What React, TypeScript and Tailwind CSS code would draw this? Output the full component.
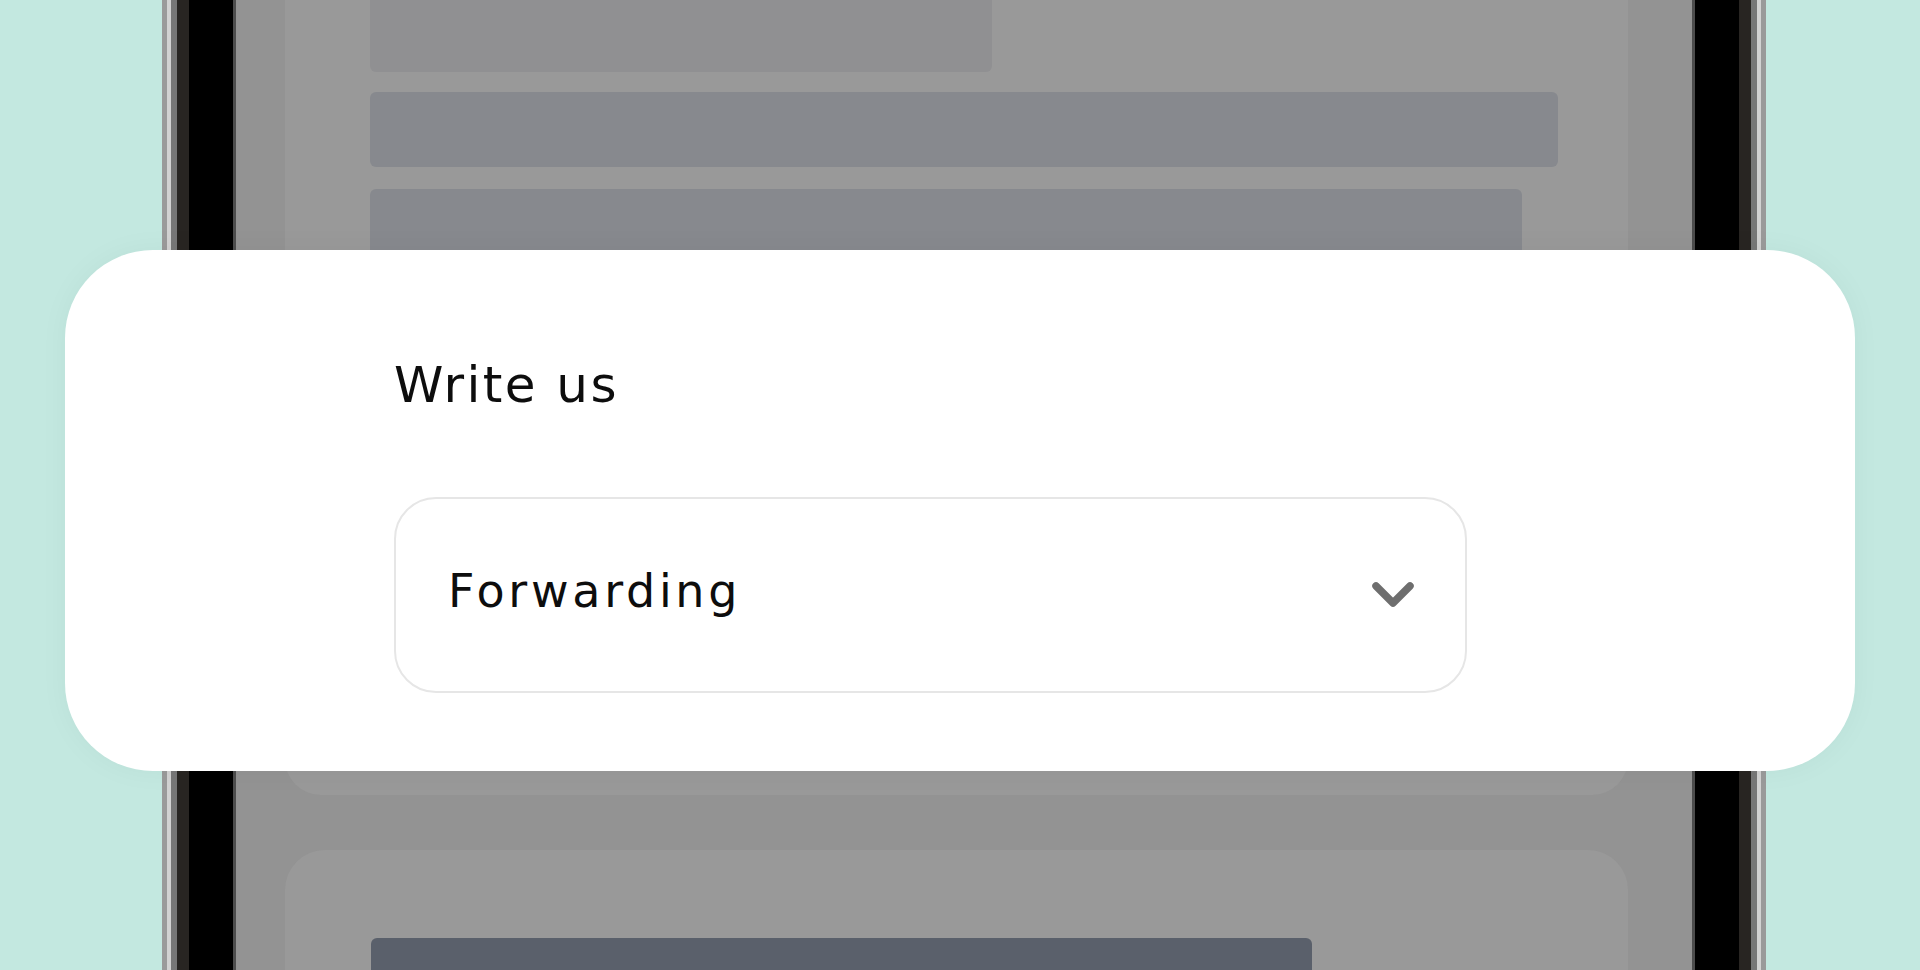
export default function App() {
  return (
    <div className="relative h-[970px] w-[1920px] overflow-hidden bg-[#c3e8e0] font-['DejaVu_Sans',sans-serif]">
      {/* phone frame */}
      <div className="ml-[162px] h-full w-[1604px] border-x-[5px] border-[#9a9a9a]">
        <div className="h-full border-x-[4px] border-[#d2d2d2]">
          <div className="h-full border-x-[6px] border-[#777777]">
            <div className="h-full border-x-[12px] border-[#282522]">
              <div className="h-full border-x-[44px] border-black">
                <div className="h-full border-x-[3px] border-[#4d4d4d] bg-[#939393] pl-[49px] pr-[64px]">
                  {/* card 1 */}
                  <div className="flex h-[795px] flex-col rounded-b-[36px] bg-[#999999] pl-[85px]">
                    <div className="h-[72px] w-[622px] rounded-b-[6px] bg-[#909092]" />
                    <div className="mt-[20px] h-[75px] w-[1188px] rounded-[6px] bg-[#87898e]" />
                    <div className="mt-[22px] h-[75px] w-[1152px] rounded-[6px] bg-[#87898e]" />
                  </div>
                  {/* card 2 */}
                  <div className="mt-[55px] h-[200px] rounded-t-[40px] bg-[#999999] pl-[86px] pt-[88px]">
                    <div className="h-[80px] w-[941px] rounded-t-[6px] bg-[#5a606b]" />
                  </div>
                </div>
              </div>
            </div>
          </div>
        </div>
      </div>

      {/* overlay card */}
      <div className="absolute left-[65px] top-[250px] h-[521px] w-[1790px] rounded-[88px] bg-white pl-[329px] pt-[110px] shadow-[0_0_30px_rgba(0,0,0,0.04)]">
        <h2 className="text-[50px] font-normal leading-[50px] tracking-[2.4px] text-[#0d0d0d]">
          Write us
        </h2>
        <div className="mt-[87px] flex h-[196px] w-[1073px] items-center justify-between rounded-[42px] border-2 border-[#e6e6e6] pl-[52px] pr-[50px]">
          <span className="mb-[9px] text-[46px] leading-[46px] tracking-[3.7px] text-[#0d0d0d]">
            Forwarding
          </span>
          <svg width="44" height="28" viewBox="0 0 44 28" fill="none">
            <polyline
              points="5,5 22,22 39,5"
              stroke="#6e6e6e"
              strokeWidth="7.5"
              strokeLinecap="round"
              strokeLinejoin="round"
            />
          </svg>
        </div>
      </div>
    </div>
  );
}
